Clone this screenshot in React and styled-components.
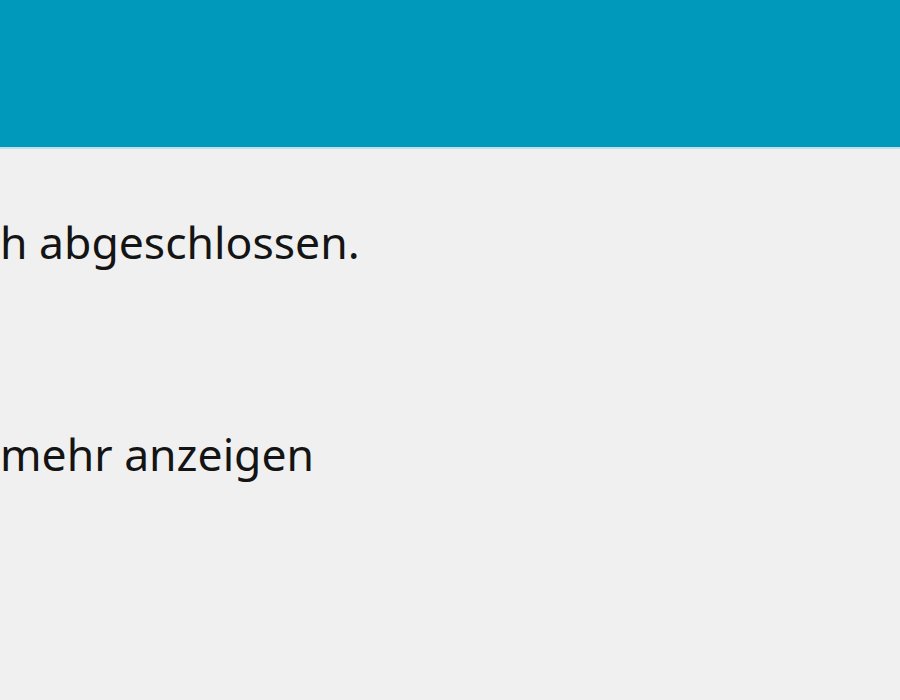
import React from 'react'
import styled, { createGlobalStyle } from 'styled-components'

const GlobalStyle = createGlobalStyle`
    html, body {
        margin: 0;
        padding: 0;
        background: #f0f0f0;
    }
    body {
        width: 900px;
        height: 700px;
        overflow: hidden;
        font-family: "Noto Sans", "Open Sans", "DejaVu Sans", sans-serif;
    }
`

const Window = styled.div`
    width: 900px;
    height: 700px;
    display: flex;
    flex-direction: column;
    background: #f0f0f0;
`

const TitleBar = styled.div`
    height: 147px;
    flex-shrink: 0;
    background: #0099bc;
    border-bottom: 2px solid #bfe0e8;
`

const Body = styled.div`
    display: flex;
    flex-direction: column;
    padding-top: 53px;
`

const Line = styled.div`
    font-size: 44.5px;
    line-height: 80px;
    color: #141414;
    white-space: nowrap;
    margin-top: ${p => p.gap || 0}px;
`

export default function App(){
    return(
        <Window>
            <GlobalStyle />
            <TitleBar />
            <Body>
                <Line>h abgeschlossen.</Line>
                <Line gap={132}>mehr anzeigen</Line>
            </Body>
        </Window>
    )
}
